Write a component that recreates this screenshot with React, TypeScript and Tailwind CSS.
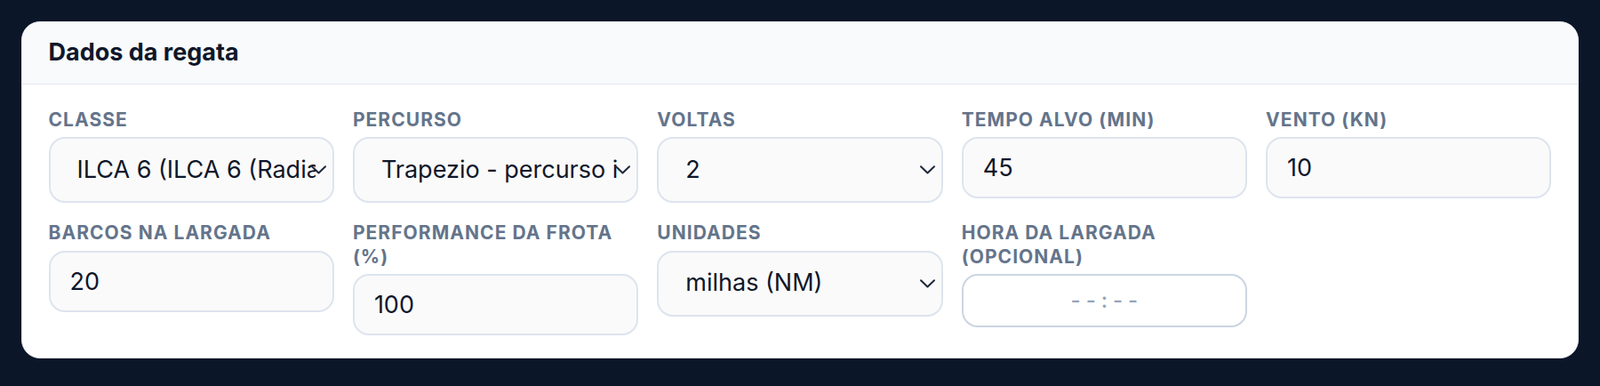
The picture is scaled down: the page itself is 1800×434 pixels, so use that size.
import React from "react";

const font = { fontFamily: "Inter, 'Noto Sans', sans-serif" };

function Label({ children }: { children: React.ReactNode }) {
  return (
    <label className="block text-[21px] leading-[26.5px] font-bold uppercase tracking-[1.05px] text-[#64748b] mb-[6px]">
      {children}
    </label>
  );
}

function Chevron() {
  return (
    <svg
      className="pointer-events-none absolute right-[9px] top-1/2 -translate-y-1/2"
      width="17"
      height="10"
      viewBox="0 0 17 10"
      fill="none"
    >
      <polyline points="1,1.2 8.5,8.5 16,1.2" stroke="#1e293b" strokeWidth="2" strokeLinecap="round" strokeLinejoin="round" />
    </svg>
  );
}

function Select({ value, options }: { value: string; options: string[] }) {
  return (
    <div className="relative">
      <select
        defaultValue={value}
        className="block w-full h-[74px] appearance-none rounded-[18px] border-2 border-[#dde4ee] bg-[#fafafa] pl-[30px] pr-[19px] text-[27px] text-[#0f172a] outline-none"
      >
        {options.map((o) => (
          <option key={o} value={o}>
            {o}
          </option>
        ))}
      </select>
      <Chevron />
    </div>
  );
}

function Input({ value }: { value: string }) {
  return (
    <input
      type="text"
      defaultValue={value}
      className="block w-full h-[69px] rounded-[18px] border-2 border-[#dde4ee] bg-[#fafafa] px-[22px] text-[27px] text-[#0f172a] outline-none"
    />
  );
}

export default function App() {
  return (
    <div className="min-h-[434px] w-full bg-[#0b1628] p-[24px]" style={font}>
      <div className="overflow-hidden rounded-[21px] border-[1.5px] border-[#e2e8f0] bg-white">
        <div className="border-b-[1.5px] border-[#e2e8f0] bg-[#f8fafc] px-[29.5px] py-[14px]">
          <h2 className="text-[27px] leading-[40.5px] font-bold text-[#0f172a]">Dados da regata</h2>
        </div>
        <div className="grid grid-cols-5 items-start gap-x-[21px] gap-y-[21px] px-[29.5px] pt-[27px] pb-[25px]">
          <div>
            <Label>Classe</Label>
            <Select
              value="ILCA 6 (ILCA 6 (Radial))"
              options={["ILCA 6 (ILCA 6 (Radial))", "ILCA 7 (ILCA 7 (Standard))", "ILCA 4 (ILCA 4 (4.7))"]}
            />
          </div>
          <div>
            <Label>Percurso</Label>
            <Select
              value="Trapezio - percurso interno"
              options={["Trapezio - percurso interno", "Trapezio - percurso externo", "Barlavento - sotavento"]}
            />
          </div>
          <div>
            <Label>Voltas</Label>
            <Select value="2" options={["1", "2", "3", "4"]} />
          </div>
          <div>
            <Label>Tempo alvo (min)</Label>
            <Input value="45" />
          </div>
          <div>
            <Label>Vento (kn)</Label>
            <Input value="10" />
          </div>
          <div>
            <Label>Barcos na largada</Label>
            <Input value="20" />
          </div>
          <div>
            <Label>Performance da frota (%)</Label>
            <Input value="100" />
          </div>
          <div>
            <Label>Unidades</Label>
            <Select value="milhas (NM)" options={["milhas (NM)", "quilômetros (km)"]} />
          </div>
          <div>
            <Label>Hora da largada (opcional)</Label>
            <div className="flex h-[60px] w-full items-center justify-center rounded-[18px] border-2 border-[#cbd5e1] bg-white text-[24px] font-medium text-[#94a3b8]">
              <span className="tracking-[6px] pl-[6px]">--:--</span>
            </div>
          </div>
        </div>
      </div>
    </div>
  );
}
